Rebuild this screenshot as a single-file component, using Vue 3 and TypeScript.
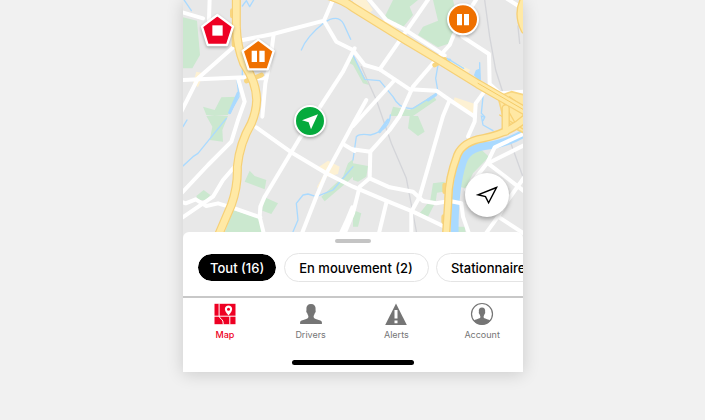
<script setup lang="ts">
import { ref } from 'vue'

type TabId = 'map' | 'drivers' | 'alerts' | 'account'

const tabs: { id: TabId; label: string }[] = [
  { id: 'map', label: 'Map' },
  { id: 'drivers', label: 'Drivers' },
  { id: 'alerts', label: 'Alerts' },
  { id: 'account', label: 'Account' },
]
const filters: string[] = ['Tout (16)', 'En mouvement (2)', 'Stationnaire']

const activeTab = ref<TabId>('map')
const activeFilter = ref<string>('Tout (16)')

const parks: string[] = [
  'M0 52L42 62L51 165L28 205H0Z',
  'M60 320L95 330L115 292L165 290L135 345L95 348L70 345Z',
  'M70 348H135L118 390L120 425L80 420L88 380Z',
  'M200 512L215 528L250 540L245 568L185 545Z',
  'M40 588L62 570L82 585L70 600H45Z',
  'M245 592L285 610L265 642L238 632Z',
  'M150 630L230 655L240 712H120Z',
  'M510 478L495 490L480 530L415 590L425 604L500 540L510 530Z',
  'M500 190L510 165V195Z',
  'M630 0H705L680 20L690 45L655 88L605 50Z',
  'M750 0H810L830 80L800 130L765 142L705 105L720 80L765 62Z',
  'M510 165L530 205L558 255L540 250L510 195Z',
  'M630 320L680 330L750 285L760 300L690 348H622Z',
  'M680 348H705L725 395L705 408L675 385Z',
  'M510 490L555 498L550 530L525 545L510 540Z',
  'M750 550L785 545L782 575L762 578L758 605L735 650L710 640L742 600Z',
  'M850 470L890 445L918 470L870 520L848 565L828 560Z',
  'M510 630L535 640L525 680H510Z',
  'M815 680H845L850 715H812Z',
]
const blocks: string[] = [
  'M40 215L62 220L45 262L30 250Z',
  'M510 0H550L570 30L555 42L510 20Z',
  'M595 60L640 68L650 85L610 80Z',
  'M790 175L862 210L848 228L785 195Z',
  'M815 292L885 315L870 342L810 308Z',
  'M408 500L435 482L470 500L465 522L430 530L410 575L402 560L425 520Z',
]
const streams: string[] = [
  'M0 -5L25 32',
  'M178 18L190 2L200 20L212 0',
  'M178 200V230',
  'M355 150Q370 110 423 68Q465 40 482 72L503 118',
  'M0 498L30 470L45 460L98 395L130 355',
  'M162 240L168 290L140 340',
  'M510 165L545 238L590 242L630 290Q650 330 690 325L760 282',
  'M765 195L758 235L764 270',
  'M786 185L792 175L842 205',
  'M330 695L345 660L340 610L360 585L375 582L400 590L450 570L510 500',
  'M510 480L520 410Q530 400 562 405Q620 390 622 345',
  'M900 290L895 340L905 350',
  'M895 348L900 375L930 392M895 348L905 352L900 362',
  'M0 380L12 360',
]
const streets: string[] = [
  'M-5 36L60 55M80 -5L78 60',
  'M180 120L270 102L423 62L452 -5',
  'M155 138L45 235L-5 335',
  'M-5 240L185 232M225 235H250',
  'M272 102L262 180L247 250L238 350',
  'M423 62L460 125L510 150',
  'M510 150L545 195L590 208L680 268L760 272L800 300L875 350',
  'M515 145L480 215L350 415L245 590L232 620L230 650L245 712',
  'M165 235L185 305L165 360L145 425L75 495L-5 580',
  'M-5 655L90 590L120 540L155 500L185 430',
  'M-5 605L8 610L38 598L70 618L105 610L155 625L232 652',
  'M220 382L322 455L430 520L510 560L600 598L690 635L780 678',
  'M550 300L510 372L430 520L400 590L355 705',
  'M485 435L515 453M508 622L490 665L468 712',
  'M635 240L510 378',
  'M738 -5L665 100L590 208',
  'M555 -5L610 60L665 88L785 166',
  'M882 -5L840 60L812 105L800 135L750 190L690 260L650 348L620 390L562 455L560 535L530 560L510 640L480 712',
  'M838 110L918 162L920 252L950 280L1025 275',
  'M800 300L780 348L710 590L685 635L685 712',
  'M560 535L620 562L690 575L720 603L760 610L800 603L835 610L840 650L862 712',
  'M508 448L562 455M610 608L585 712',
  'M900 280L878 310L875 365L855 410',
  'M970 -5L1025 30',
  'M1025 400L935 442L912 490L850 570',
  'M1025 435L915 490L1025 575M1025 530L975 600L945 650L900 712M945 650L1025 702',
]
const highways: string[] = [
  'M160 -10V80Q162 140 182 190Q220 245 221 300Q220 335 205 370Q170 430 163 500Q165 560 145 615L98 725',
  'M440 -12Q480 0 510 22L665 118L768 180L885 252L1030 335',
]
const bends: string[] = [
  'M1030 352Q980 400 900 415Q840 425 823 465Q795 540 796 600L788 725',
  'M968 325V395',
  'M1025 -5Q1000 40 1025 90',
]
</script>

<template>
  <main class="page">
    <section class="phone">
      <div class="map">
        <svg class="map-canvas" viewBox="0 0 1020 720" preserveAspectRatio="xMidYMin slice" role="img" aria-label="Map">
          <path v-for="d in parks" :key="d" :d="d" fill="#cbe8cf" />
          <path v-for="d in blocks" :key="d" :d="d" fill="#fdf1d3" />
          <g fill="none" stroke-linejoin="round" stroke-linecap="round">
            <path d="M905 0L920 110L938 210L962 285M535 200L580 300L625 430L670 535L705 720M1020 30L1005 80L1010 130M980 420L1025 545" stroke="#d4d5d9" stroke-width="4" />
            <path v-for="d in streams" :key="d" :d="d" stroke="#aadaff" stroke-width="4" />
            <path d="M165 280L140 338M785 188L800 180M735 300L758 284M615 360L590 395" stroke="#aadaff" stroke-width="9" />
            <path d="M1030 395Q980 430 905 438Q850 445 838 490Q812 570 815 720" stroke="#aadaff" stroke-width="24" />
            <path d="M890 188L892 245L875 225L880 212L890 208Z" fill="#aadaff" stroke="#aadaff" stroke-width="4" />
            <path v-for="d in streets" :key="d" :d="d" stroke="#fff" stroke-width="12" />
            <path d="M945 290L985 275L1025 285V400L995 385L960 350Z" fill="#ffe8a3" stroke="#f8d680" stroke-width="5" />
            <path d="M980 290L1025 325M960 305L1000 375M950 345L1025 390" stroke="#f8d275" stroke-width="4" />
            <path d="M148 32V48M190 243L236 225M153 103V135M657 112L670 128M755 195L785 178M785 555V575M782 650V665" stroke="#f8d680" stroke-width="14" />
            <g stroke="#f6d076" stroke-width="27">
              <path v-for="d in highways" :key="d" :d="d" />
              <path v-for="d in bends" :key="d" :d="d" stroke-width="25" />
            </g>
            <g stroke="#ffe9a5" stroke-width="20">
              <path v-for="d in highways" :key="d" :d="d" />
              <path v-for="d in bends" :key="d" :d="d" stroke-width="17" />
            </g>
            <path d="M885 250L1020 328" stroke="#f5cb67" stroke-width="3" />
          </g>

          <g class="pin">
            <path d="M103 45L150 80L132 135H74L57 80Z" fill="#ee0023" stroke="#fff" stroke-width="7" stroke-linejoin="round" />
            <path d="M88 76H119V107H88Z" fill="#fff" />
          </g>
          <g class="pin">
            <path d="M226 119L272 153L254 208H197L179 153Z" fill="#ef7000" stroke="#fff" stroke-width="7" stroke-linejoin="round" />
            <path d="M206 152H222V186H206ZM229 152H245V186H229Z" fill="#fff" />
          </g>
          <g class="pin">
            <circle cx="840" cy="58" r="45" fill="#ef7000" stroke="#fff" stroke-width="6" />
            <path d="M822 42H837V76H822ZM843 42H858V76H843Z" fill="#fff" />
          </g>
          <g class="pin">
            <circle cx="381" cy="363" r="45" fill="#05aa3d" stroke="#fff" stroke-width="6" />
            <path d="M405 343L357 361L377 367L384 388Z" fill="#fff" />
          </g>
        </svg>
        <button class="locate" type="button" aria-label="Locate">
          <svg viewBox="0 0 24 24" width="24" height="24" fill="none" stroke="#000" stroke-width="1.4" stroke-linejoin="miter">
            <path d="M21.5 4.5L3 11.8L10.5 13.6L13.6 19.8Z" />
          </svg>
        </button>
      </div>

      <div class="sheet">
        <span class="handle"></span>
        <div class="filters">
          <button
            v-for="f in filters"
            :key="f"
            type="button"
            class="chip"
            :class="{ selected: f === activeFilter }"
            :aria-pressed="f === activeFilter"
            @click="activeFilter = f"
          >{{ f }}</button>
        </div>
      </div>

      <nav class="tabs">
        <button
          v-for="t in tabs"
          :key="t.id"
          type="button"
          class="tab"
          :class="{ current: t.id === activeTab }"
          @click="activeTab = t.id"
        >
          <svg class="tab-icon" viewBox="0 0 24 24" fill="currentColor" aria-hidden="true">
            <template v-if="t.id === 'map'">
              <path d="M1.5 1.8H22.5V22.2H1.5Z" />
              <g fill="none" stroke="#fff" stroke-width="1">
                <path d="M6.1 1.5V14M1 14.2H23M16.8 14V22.5M6 14Q6.5 16 8.5 17.2Q10.3 18.2 10.3 22.5" />
              </g>
              <path d="M15.5 3.5C13.4 3.5 11.9 5 11.9 7C11.9 9.8 15.5 13.4 15.5 13.4S19.1 9.8 19.1 7C19.1 5 17.6 3.5 15.5 3.5Z" fill="#fff" />
              <circle cx="15.5" cy="7.2" r="1.5" />
            </template>
            <path
              v-else-if="t.id === 'drivers'"
              d="M12 2C8.8 2 7.2 4 7.4 7L7.5 8.2C7 8.6 7.3 10.6 8.1 11.1C8.5 12.6 9.4 13.4 9.4 14.8C9.4 16 8.5 16.5 6.5 17.2C3.3 18.2 1.1 18.6 1.1 20.2V22H22.9V20.2C22.9 18.6 20.7 18.2 17.5 17.2C15.5 16.5 14.6 16 14.6 14.8C14.6 13.4 15.5 12.6 15.9 11.1C16.7 10.6 17 8.6 16.5 8.2L16.6 7C16.8 4 15.2 2 12 2Z"
            />
            <template v-else-if="t.id === 'alerts'">
              <path d="M12 1.5L22.8 23H1.2Z" />
              <path d="M10.5 8H13.5V16.5H10.5ZM10.5 18.5H13.5V21.2H10.5Z" fill="#fff" />
            </template>
            <template v-else>
              <circle cx="12" cy="12" r="10.5" fill="none" stroke="currentColor" stroke-width="1.2" />
              <path d="M12 5.5C9.7 5.5 8.7 7 8.8 9.2L9 10.1C8.5 10.3 8.8 11.8 9.4 12.1C9.7 13.3 10.4 14 10.4 15C10.4 16 9.2 16.5 7.5 17C5.6 17.5 4.3 18 3.8 18.8C5.8 21.4 8.7 22.8 12 22.8S18.2 21.4 20.2 18.8C19.7 18 18.4 17.5 16.5 17C14.8 16.5 13.6 16 13.6 15C13.6 14 14.3 13.3 14.6 12.1C15.2 11.8 15.5 10.3 15 10.1L15.2 9.2C15.3 7 14.3 5.5 12 5.5Z" />
            </template>
          </svg>
          <span>{{ t.label }}</span>
        </button>
      </nav>
      <div class="home"></div>
    </section>
  </main>
</template>

<style>
html,
body {
  background: #f1f1f1;
}
</style>

<style scoped>
.page {
  display: flex;
  justify-content: center;
  padding: 0 0 48px 1px;
  overflow: hidden;
  font-family: Inter, "Liberation Sans", sans-serif;
}

.phone {
  width: 100%;
  max-width: 340px;
  padding-bottom: 7px;
  background: #fff;
  box-shadow: 0 2px 16px rgba(0, 0, 0, 0.16);
}

.map {
  position: relative;
  overflow: hidden;
  background: #e8e8e8;
}

.map-canvas {
  display: block;
  width: 100%;
}

.pin {
  filter: drop-shadow(0 4px 4px rgba(0, 0, 0, 0.3));
}

.locate {
  position: absolute;
  right: 14px;
  bottom: 23px;
  display: grid;
  place-items: center;
  width: 44px;
  height: 44px;
  padding: 0;
  border: 0;
  border-radius: 50%;
  background: #fff;
  box-shadow: 0 2px 5px rgba(0, 0, 0, 0.35);
}

.sheet {
  position: relative;
  margin-top: -8px;
  padding: 7px 0 14px;
  border-bottom: 2px solid #c8c8c8;
  border-radius: 6px 6px 0 0;
  background: #fff;
}

.handle {
  display: block;
  width: 36px;
  height: 4px;
  margin: 0 auto 10px;
  border-radius: 2px;
  background: #c4c4c4;
}

.filters {
  display: flex;
  gap: 7px;
  padding-left: 14px;
  overflow: hidden;
}

.chip {
  flex: none;
  height: 29px;
  padding: 0 15px 0 14px;
  border: 1px solid #e4e4e4;
  border-radius: 15px;
  background: #fff;
  color: #000;
  font: 500 13px/20px Inter, "Liberation Sans", sans-serif;
}

.chip.selected {
  padding: 0 12px;
  border-color: #fff;
  background: #000;
  background-clip: padding-box;
  color: #fff;
}

.tabs {
  display: grid;
  grid-template-columns: repeat(4, 1fr);
  margin: 0 -2px 0 -1px;
  padding-top: 4px;
}

.tab {
  display: flex;
  flex-direction: column;
  align-items: center;
  gap: 3px;
  padding: 0;
  border: 0;
  background: none;
  color: #757575;
  font: 400 9px/12px Inter, "Liberation Sans", sans-serif;
}

.tab.current {
  color: #ee0023;
  font-weight: 500;
}

.tab-icon {
  width: 24px;
  height: 24px;
}

.home {
  width: 122px;
  height: 5px;
  margin: 19px auto 0;
  border-radius: 3px;
  background: #000;
}
</style>
